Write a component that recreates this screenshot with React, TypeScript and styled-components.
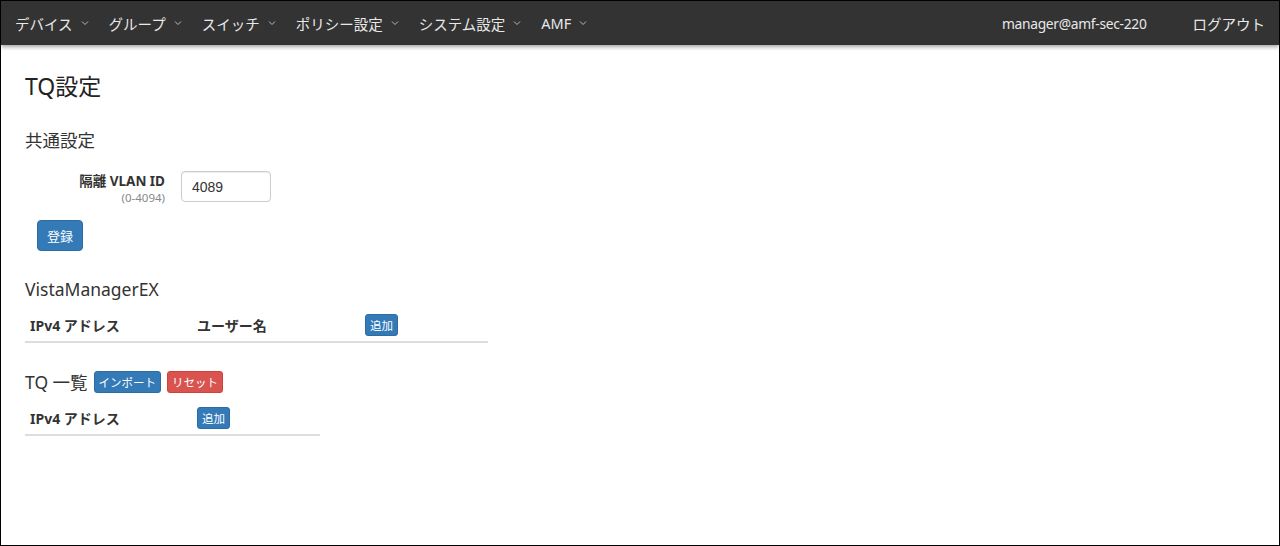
import React from 'react';
import styled, { createGlobalStyle } from 'styled-components';

const GlobalStyle = createGlobalStyle`
  html, body {
    margin: 0;
    padding: 0;
    background: #fff;
  }
  body {
    font-family: "Noto Sans", "Noto Sans CJK JP", sans-serif;
    color: #333;
  }
`;

const Frame = styled.div`
  width: 1280px;
  height: 546px;
  box-sizing: border-box;
  border: 1px solid #000;
  overflow: hidden;
  display: flex;
  flex-direction: column;
`;

const Navbar = styled.nav`
  height: 44px;
  background: #333;
  display: flex;
  align-items: center;
  justify-content: space-between;
  padding: 0 14px;
  box-shadow: 0 2px 4px rgba(0, 0, 0, 0.35);
  flex-shrink: 0;
`;

const NavGroup = styled.div<{ gap: number }>`
  display: flex;
  align-items: center;
  gap: ${({ gap }) => gap}px;
`;

const NavItem = styled.span<{ latin?: boolean }>`
  display: flex;
  align-items: center;
  gap: 8px;
  color: #e8e8e8;
  font-size: ${({ latin }) => (latin ? '13.8px' : '14.5px')};
  letter-spacing: ${({ latin }) => (latin ? '-0.3px' : '0')};
  white-space: nowrap;
`;

const Caret = () => (
  <svg width="8" height="6" viewBox="0 0 8 6">
    <path d="M1 1.5 L4 4.5 L7 1.5" fill="none" stroke="#bbb" strokeWidth="1" />
  </svg>
);

const Content = styled.main`
  padding: 26px 24px;
  display: flex;
  flex-direction: column;
`;

const PageTitle = styled.h1`
  margin: 2px 0 30px;
  font-size: 23px;
  font-weight: 400;
  line-height: 26px;
  color: #222;
`;

const SectionTitle = styled.h2`
  margin: 0;
  font-size: 17.5px;
  font-weight: 400;
  line-height: 22px;
  color: #333;
`;

const FormRow = styled.div`
  display: flex;
  align-items: flex-start;
  margin-top: 20px;
`;

const LabelBox = styled.div`
  width: 140px;
  text-align: right;
  padding-top: 1px;
`;

const Label = styled.div`
  font-size: 13.5px;
  font-weight: 700;
  color: #333;
  line-height: 18px;
`;

const Hint = styled.div`
  font-size: 11.5px;
  color: #888;
  line-height: 15px;
`;

const Input = styled.input`
  margin-left: 16px;
  width: 90px;
  height: 31px;
  box-sizing: border-box;
  border: 1px solid #ccc;
  border-radius: 4px;
  padding: 0 10px;
  font-family: "Liberation Sans", Arial, sans-serif;
  font-size: 14px;
  color: #333;
  box-shadow: inset 0 1px 1px rgba(0, 0, 0, 0.075);
`;

const Button = styled.button<{ variant?: 'primary' | 'danger'; size?: 'md' | 'xs' }>`
  font-family: "Noto Sans CJK JP", sans-serif;
  color: #fff;
  border-radius: 3px;
  cursor: pointer;
  border: 1px solid ${({ variant }) => (variant === 'danger' ? '#d43f3a' : '#2e6da4')};
  background: ${({ variant }) => (variant === 'danger' ? '#d9534f' : '#337ab7')};
  ${({ size }) =>
    size === 'xs'
      ? `height: 22px; padding: 0 4px; font-size: 11.5px; line-height: 20px;`
      : `height: 31px; padding: 0 9px; font-size: 13px; line-height: 29px; border-radius: 4px;`}
`;

const SubmitRow = styled.div`
  margin: 15px 0 0 12px;
`;

const Section = styled.section<{ top: number }>`
  margin-top: ${({ top }) => top}px;
`;

const TitleRow = styled.div`
  display: flex;
  align-items: center;
  gap: 6px;
`;

const Table = styled.table<{ width: number }>`
  width: ${({ width }) => width}px;
  border-collapse: collapse;
  margin-top: 10px;
`;

const Th = styled.th<{ w?: number }>`
  text-align: left;
  font-size: 14px;
  font-weight: 700;
  color: #333;
  padding: 4px 5px 5px;
  border-bottom: 2px solid #ddd;
  ${({ w }) => (w ? `width: ${w}px;` : '')}
  white-space: nowrap;
`;

const App: React.FC = () => {
  const leftMenu = ['デバイス', 'グループ', 'スイッチ', 'ポリシー設定', 'システム設定', 'AMF'];
  return (
    <>
      <GlobalStyle />
      <Frame>
        <Navbar>
          <NavGroup gap={20}>
            {leftMenu.map((m) => (
              <NavItem key={m}>
                {m}
                <Caret />
              </NavItem>
            ))}
          </NavGroup>
          <NavGroup gap={46}>
            <NavItem latin>manager@amf-sec-220</NavItem>
            <NavItem>ログアウト</NavItem>
          </NavGroup>
        </Navbar>
        <Content>
          <PageTitle>TQ設定</PageTitle>
          <SectionTitle>共通設定</SectionTitle>
          <FormRow>
            <LabelBox>
              <Label>隔離 VLAN ID</Label>
              <Hint>(0-4094)</Hint>
            </LabelBox>
            <Input defaultValue="4089" />
          </FormRow>
          <SubmitRow>
            <Button>登録</Button>
          </SubmitRow>

          <Section top={27}>
            <SectionTitle>VistaManagerEX</SectionTitle>
            <Table width={463}>
              <thead>
                <tr>
                  <Th w={157}>IPv4 アドレス</Th>
                  <Th w={158}>ユーザー名</Th>
                  <Th>
                    <Button size="xs">追加</Button>
                  </Th>
                </tr>
              </thead>
            </Table>
          </Section>

          <Section top={28}>
            <TitleRow>
              <SectionTitle>TQ 一覧</SectionTitle>
              <Button size="xs">インポート</Button>
              <Button size="xs" variant="danger">リセット</Button>
            </TitleRow>
            <Table width={295}>
              <thead>
                <tr>
                  <Th w={157}>IPv4 アドレス</Th>
                  <Th>
                    <Button size="xs">追加</Button>
                  </Th>
                </tr>
              </thead>
            </Table>
          </Section>
        </Content>
      </Frame>
    </>
  );
};

export default App;
